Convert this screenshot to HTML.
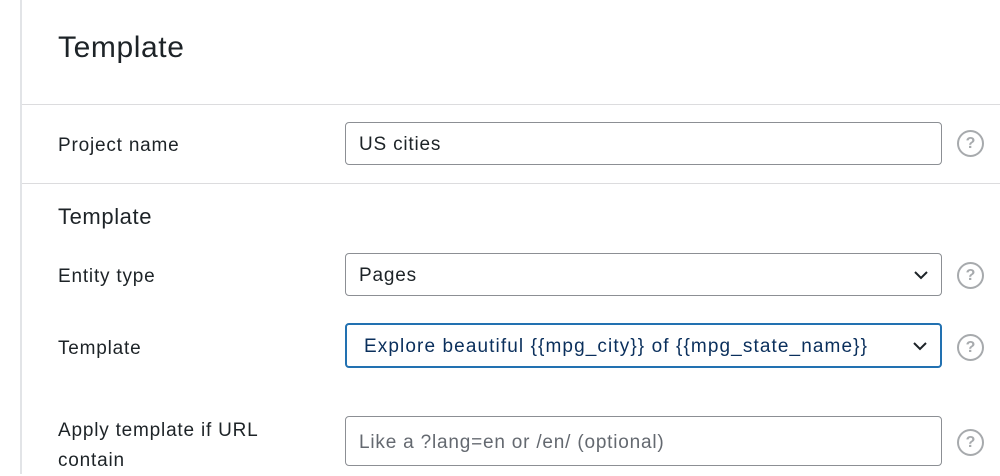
<!DOCTYPE html>
<html><head><style>
body{margin:0;width:1000px;height:474px;background:#fff;font-family:"Liberation Sans",sans-serif;color:#1d2327;position:relative;overflow:hidden}
.a{position:absolute}
.vl{left:20px;top:0;width:2px;height:474px;background:#e2e4e7}
.hl{left:22px;width:978px;height:1px;background:#dcdcde}
.lbl{left:58px;font-size:19px;letter-spacing:0.8px}
.box{left:345px;width:597px;border:1px solid #8c8f94;border-radius:4px;box-sizing:border-box;font-size:19px;letter-spacing:0.8px;padding-left:13px;padding-top:3px;display:flex;align-items:center}
.help{left:957px;width:23px;height:23px;border:2px solid #a7aaad;border-radius:50%;color:#a7aaad;font-weight:bold;font-size:16px;text-align:center;line-height:23px}
.chev{position:absolute;right:11px;top:50%;margin-top:-9px}
</style></head><body>
<div class="a vl"></div>
<div class="a" style="left:58px;top:31px;font-size:30px;letter-spacing:0.6px">Template</div>
<div class="a hl" style="top:104px"></div>
<div class="a lbl" style="top:135px">Project name</div>
<div class="a box" style="top:122px;height:43px">US cities</div>
<div class="a help" style="top:130px">?</div>
<div class="a hl" style="top:183px"></div>
<div class="a" style="left:58px;top:204px;font-size:22px;letter-spacing:0.6px">Template</div>
<div class="a lbl" style="top:266px">Entity type</div>
<div class="a box" style="top:253px;height:43px">Pages<svg class="chev" width="18" height="18" viewBox="0 0 18 18"><path d="M3 6l6 6 6-6" stroke="#1d2327" stroke-width="2" fill="none"/></svg></div>
<div class="a help" style="top:262px">?</div>
<div class="a lbl" style="top:338px">Template</div>
<div class="a box" style="top:323px;height:45px;border:2px solid #2271b1;color:#0a2f5c;padding-left:17px;letter-spacing:1.1px">Explore beautiful {{mpg_city}} of {{mpg_state_name}}<svg class="chev" width="18" height="18" viewBox="0 0 18 18"><path d="M3 6l6 6 6-6" stroke="#1d2327" stroke-width="2" fill="none"/></svg></div>
<div class="a help" style="top:334px">?</div>
<div class="a lbl" style="top:416px;line-height:30px">Apply template if URL<br>contain</div>
<div class="a box" style="top:416px;height:50px;color:#646970">Like a ?lang=en or /en/ (optional)</div>
<div class="a help" style="top:429px">?</div>
</body></html>
